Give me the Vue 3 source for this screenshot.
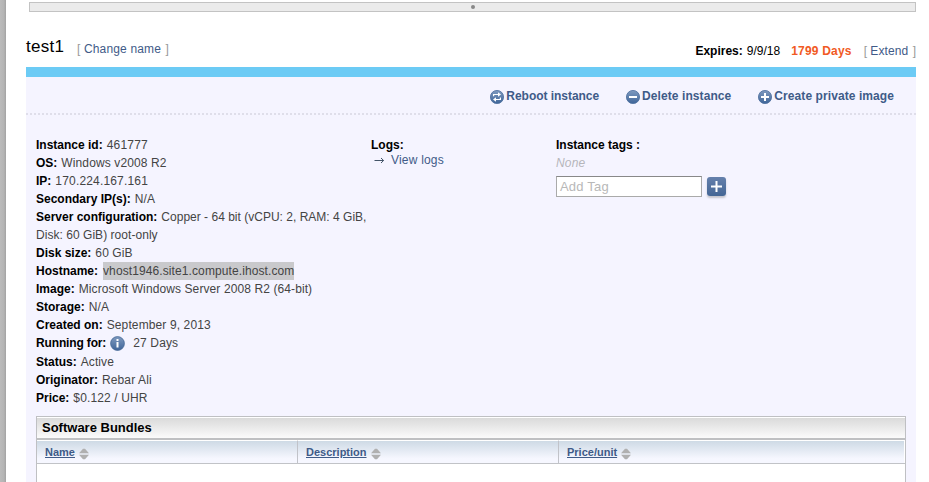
<script setup>
const actions = [
  { kind: 'reboot', label: 'Reboot instance' },
  { kind: 'delete', label: 'Delete instance' },
  { kind: 'create', label: 'Create private image' }
]
const details = [
  { label: 'Instance id:', value: '461777', track: 0.2 },
  { label: 'OS:', value: 'Windows v2008 R2', track: 0.12 },
  { label: 'IP:', value: '170.224.167.161', track: 0.17 },
  { label: 'Secondary IP(s):', value: 'N/A', track: 0.1 },
  { label: 'Server configuration:', value: 'Copper - 64 bit (vCPU: 2, RAM: 4 GiB,', more: 'Disk: 60 GiB) root-only', track: 0.01 },
  { label: 'Disk size:', value: '60 GiB', track: 0.1 },
  { label: 'Hostname:', value: 'vhost1946.site1.compute.ihost.com', selected: true, track: 0.1 },
  { label: 'Image:', value: 'Microsoft Windows Server 2008 R2 (64-bit)', track: 0.1 },
  { label: 'Storage:', value: 'N/A', track: 0.1 },
  { label: 'Created on:', value: 'September 9, 2013', track: 0.12 },
  { label: 'Running for:', value: '27 Days', info: true, track: 0.15 },
  { label: 'Status:', value: 'Active', track: 0.1 },
  { label: 'Originator:', value: 'Rebar Ali', track: 0.12 },
  { label: 'Price:', value: '$0.122 / UHR', track: 0.13 }
]
const columns = ['Name', 'Description', 'Price/unit']
</script>

<template>
  <div class="page">
    <svg class="defs" width="0" height="0" aria-hidden="true">
      <defs>
        <linearGradient id="ball" x1="0" y1="0" x2="0" y2="1">
          <stop offset="0" stop-color="#7f9abf" />
          <stop offset="1" stop-color="#3f6599" />
        </linearGradient>
      </defs>
    </svg>
    <div class="edge"></div>
    <main class="content">
      <div class="splitter"><i></i></div>
      <header class="heading">
        <div class="title">
          <h1>test1</h1>
          <span class="bracket">[ <a>Change name</a> ]</span>
        </div>
        <div class="expires">
          <b>Expires:</b><span class="date">9/9/18</span><b class="days">1799 Days</b>
          <span class="bracket ext">[ <a>Extend</a> ]</span>
        </div>
      </header>
      <section class="panel">
        <nav class="actions">
          <a v-for="a in actions" :key="a.kind" :class="['action', a.kind]">
            <svg width="14" height="14" viewBox="0 0 14 14">
              <circle cx="7" cy="7" r="6.6" fill="url(#ball)" stroke="#4d6f9e" stroke-width=".8" />
              <g v-if="a.kind === 'reboot'" fill="none" stroke="#fff" stroke-width="1.2">
                <path d="M3.6 6.2V4.5h5" />
                <path d="M10.4 7.6v1.9h-5" />
                <path d="M8 2.2l3 2.3-3 2.3zM6 7.2L3 9.5l3 2.3z" fill="#fff" stroke="none" />
              </g>
              <path v-else-if="a.kind === 'delete'" d="M3 7h8" stroke="#fff" stroke-width="2" />
              <path v-else d="M3 7h8M7 3v8" stroke="#fff" stroke-width="2" />
            </svg><span>{{ a.label }}</span>
          </a>
        </nav>
        <div class="info">
          <div class="details">
            <div v-for="d in details" :key="d.label" :class="['row', { tall: d.info }]">
              <b>{{ d.label }}</b>
              <svg v-if="d.info" class="info-icon" width="15" height="15" viewBox="0 0 15 15">
                <circle cx="7.5" cy="7.5" r="6.9" fill="url(#ball)" stroke="#456896" stroke-width=".8" />
                <path d="M6.5 3h2v2h-2zM6.5 6h2v5.5h-2z" fill="#fff" />
              </svg>
              <span :class="{ selected: d.selected }" :style="{ letterSpacing: d.track + 'px' }">{{ d.value }}</span>
              <div v-if="d.more" class="more">{{ d.more }}</div>
            </div>
          </div>
          <div class="logs">
            <b>Logs:</b>
            <div class="log-link">
              <svg width="11" height="9" viewBox="0 0 11 9"><path d="M.5 4.5h9M7 2l2.6 2.5L7 7" fill="none" stroke="#435468" /></svg>
              <a>View logs</a>
            </div>
          </div>
          <div class="tags">
            <b>Instance tags :</b>
            <em>None</em>
            <div class="add">
              <div class="field">Add Tag</div>
              <div class="plus">
                <svg width="11" height="11" viewBox="0 0 11 11"><path d="M0 5.5h11M5.5 0v11" stroke="#fff" stroke-width="2" /></svg>
              </div>
            </div>
          </div>
        </div>
        <div class="bundles">
          <h2>Software Bundles</h2>
          <div class="columns">
            <div v-for="c in columns" :key="c" class="col">
              <a>{{ c }}</a>
              <svg width="10" height="12" viewBox="0 0 10 12"><path d="M0 5.3l4-4.5h2l4 4.5zM0 6.7h10l-4 4.5H4z" fill="#b0b0b0" /></svg>
            </div>
          </div>
        </div>
      </section>
    </main>
  </div>
</template>

<style>
body { overflow: hidden; background: #fff; }
</style>

<style scoped>
* { box-sizing: border-box; }
.page {
  display: flex;
  width: 929px;
  height: 482px;
  overflow: hidden;
  font: 12px/18px "Liberation Sans", Arial, sans-serif;
  color: #444;
}
.defs { position: absolute; }
.edge { width: 6px; background: linear-gradient(90deg, #bbb, #b4b4b4 65%, #a2a2a2); }
.content { width: 890px; margin-left: 20px; padding-top: 2px; }
.splitter {
  display: flex;
  align-items: center;
  justify-content: center;
  height: 10px;
  margin-left: 3px;
  border: 1px solid #c3c3c3;
  background: #ebebeb;
}
.splitter i { width: 4px; height: 4px; border-radius: 2px; background: #888; }
.heading { display: flex; justify-content: space-between; height: 55px; }
a { color: #3f5b88; }
b { color: #000; }
.title { display: flex; padding-top: 26px; }
h1 { margin: 0; width: 51px; font-size: 17px; font-weight: 400; line-height: 18px; letter-spacing: .25px; color: #000; }
.title .bracket { padding-top: 2px; letter-spacing: .15px; }
.bracket { color: #999; white-space: pre; }
.bracket a { margin: 0 1px 0 0; }
.ext a { margin-left: 0; letter-spacing: .1px; }
.expires { display: flex; padding-top: 30px; white-space: pre; }
.date { margin-left: 4px; color: #000; }
.days { margin: 0 12px 0 11px; letter-spacing: .2px; color: #f15a24; }
.panel { height: 415px; padding: 0 10px; border-top: 10px solid #6ccbf5; background: #f5f4ff; }
.actions {
  display: flex;
  justify-content: flex-end;
  height: 38px;
  margin: 0 -10px;
  padding: 10px 22px 0 0;
  border-bottom: 2px dotted #dfdeea;
}
.action { display: flex; height: 18px; margin-left: 27px; font-weight: 700; letter-spacing: .08px; }
.reboot { letter-spacing: -.04px; }
.action svg { margin: 3px 2px 0 0; }
.info { display: flex; height: 301px; padding-top: 21px; }
.details { width: 335px; white-space: nowrap; }
.row b { margin-right: 4px; }
.row.tall { height: 19px; }
.row.tall b { letter-spacing: -.15px; }
.info-icon { margin: 0 8px 0 0; vertical-align: -4px; }
.more { letter-spacing: .04px; }
.selected { display: inline-block; height: 18px; margin-left: 1px; background: #c9c9cc; vertical-align: top; }
.logs { width: 185px; }
.logs b { display: block; height: 15px; }
.log-link { display: flex; align-items: center; gap: 6px; height: 18px; padding-left: 3px; letter-spacing: .2px; }
.tags b, .tags em { display: block; }
.tags em { color: #b6b6bb; letter-spacing: .15px; }
.add { display: flex; gap: 5px; padding-top: 4px; }
.field {
  width: 146px;
  height: 21px;
  padding-left: 3px;
  border: 1px solid #aaa;
  border-top-color: #888;
  background: #fff;
  font-size: 13px;
  line-height: 19px;
  letter-spacing: .2px;
  color: #b8b8b8;
}
.plus {
  display: flex;
  align-items: center;
  justify-content: center;
  width: 19px;
  height: 19px;
  margin-top: 1px;
  border-radius: 3px;
  background: linear-gradient(#6580ac, #446695);
  box-shadow: 0 2px 2px #c5c5cd;
}
.bundles { height: 80px; border: 1px solid #bfc0c3; background: #fff; }
h2 {
  height: 23px;
  margin: 0;
  padding-left: 5px;
  border-top: 1px solid #fff;
  border-bottom: 2px solid #bfc0c2;
  background: linear-gradient(#dadada, #fbfbfb);
  font-size: 13px;
  line-height: 20px;
  color: #000;
}
.columns { display: grid; grid-template-columns: 261px 261px 1fr; height: 24px; border-bottom: 1px solid #c1c3c7; }
.col {
  display: flex;
  padding: 2px 0 0 8px;
  border: 1px solid #fff;
  border-width: 1px 1px 0 0;
  background: linear-gradient(#cedae5, #f6f7ff 80%);
  font-size: 11px;
  font-weight: 700;
  line-height: 18px;
}
.col:not(:last-child) { border-right-color: #c1c3c9; }
.col a { text-decoration: underline; }
.col svg { margin: 5px 0 0 4px; }
</style>
